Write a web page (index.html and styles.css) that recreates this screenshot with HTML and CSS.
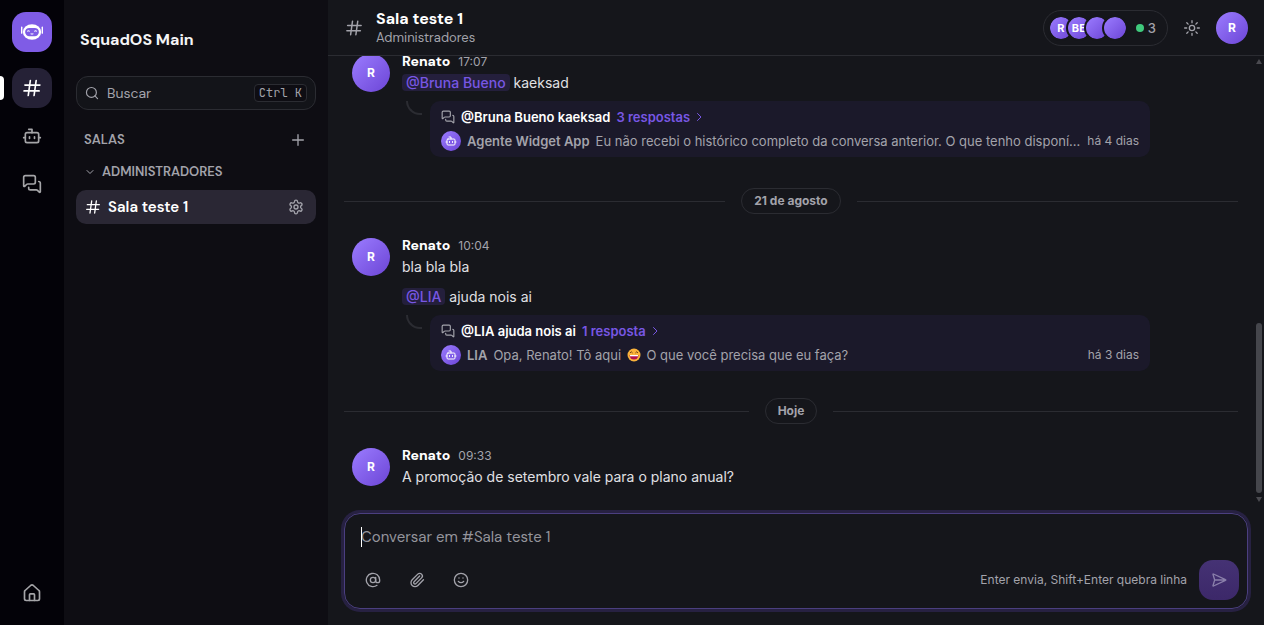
FILE: index.html
```html
<!DOCTYPE html>
<html lang="pt-BR">
<head>
<meta charset="utf-8">
<meta name="viewport" content="width=device-width, initial-scale=1">
<title>SquadOS Main</title>
<link rel="stylesheet" href="styles.css">
</head>
<body>
<svg class="sprite" aria-hidden="true">
  <symbol id="i-hash" viewBox="0 0 24 24"><path d="M3.5 8.5h18M2.5 15.5h18M10 3L7.500 21M17 3l-2.500 18"/></symbol>
  <symbol id="i-bot" viewBox="0 0 24 24"><path d="M12 8V4H8"/><rect x="4" y="8" width="16" height="12" rx="2"/><path d="M2 14h2M20 14h2M15 13v2M9 13v2"/></symbol>
  <symbol id="i-chats" viewBox="0 0 24 24"><path d="M16 10a2 2 0 0 1-2 2H6.828a2 2 0 0 0-1.414.586l-2.202 2.202A.71.71 0 0 1 2 14.286V4a2 2 0 0 1 2-2h10a2 2 0 0 1 2 2z"/><path d="M20 9a2 2 0 0 1 2 2v10.286a.71.71 0 0 1-1.212.502l-2.202-2.202A2 2 0 0 0 17.172 19H10a2 2 0 0 1-2-2v-1"/></symbol>
  <symbol id="i-home" viewBox="0 0 24 24"><path d="M9 21v-7a1 1 0 0 1 1-1h4a1 1 0 0 1 1 1v7"/><path d="M3 10.500a2 2 0 0 1 .7-1.500l7-6.300a2 2 0 0 1 2.600 0l7 6.300a2 2 0 0 1 .7 1.500V19a2 2 0 0 1-2 2H5a2 2 0 0 1-2-2z"/></symbol>
  <symbol id="i-search" viewBox="0 0 24 24"><circle cx="11" cy="11" r="8.500"/><path d="M21.500 21.500l-4.500-4.500"/></symbol>
  <symbol id="i-plus" viewBox="0 0 24 24"><path d="M12 4v16M4 12h16"/></symbol>
  <symbol id="i-down" viewBox="0 0 24 24"><path d="M6 9l6 6 6-6"/></symbol>
  <symbol id="i-right" viewBox="0 0 24 24"><path d="M9 5l7 7-7 7"/></symbol>
  <symbol id="i-gear" viewBox="0 0 24 24"><path d="M9.700 4.100a2.300 2.300 0 0 1 4.600 0 2.300 2.300 0 0 0 3.300 1.900 2.300 2.300 0 0 1 2.300 4 2.300 2.300 0 0 0 0 3.900 2.300 2.300 0 0 1-2.300 4 2.300 2.300 0 0 0-3.300 2 2.300 2.300 0 0 1-4.600 0 2.300 2.300 0 0 0-3.300-2 2.300 2.300 0 0 1-2.300-4 2.300 2.300 0 0 0 0-3.900 2.300 2.300 0 0 1 2.300-4 2.300 2.300 0 0 0 3.300-1.900"/><circle cx="12" cy="12" r="3"/></symbol>
  <symbol id="i-sun" viewBox="0 0 24 24"><circle cx="12" cy="12" r="4"/><path d="M12 1v3M12 20v3M4.200 4.200l2 2M17.800 17.800l2 2M1 12h3M20 12h3M6.200 17.800l-2 2M19.800 4.200l-2 2"/></symbol>
  <symbol id="i-at" viewBox="0 0 24 24"><circle cx="12" cy="12" r="4"/><path d="M16 8v5a3 3 0 0 0 6 0v-1a10 10 0 1 0-4 8"/></symbol>
  <symbol id="i-clip" viewBox="0 0 24 24"><path d="m16 6-8.414 8.586a2 2 0 0 0 2.829 2.829l8.414-8.586a4 4 0 1 0-5.657-5.657l-8.379 8.551a6 6 0 1 0 8.485 8.485l8.379-8.551"/></symbol>
  <symbol id="i-smile" viewBox="0 0 24 24"><circle cx="12" cy="12" r="10"/><path d="M8 14s1.500 2 4 2 4-2 4-2M9 9v.1M15 9v.1"/></symbol>
  <symbol id="i-send" viewBox="0 0 24 24"><path d="M3.700 3a.5.5 0 0 0-.7.600L5.500 12 3 20.400a.5.5 0 0 0 .7.600l18-8.500a.5.5 0 0 0 0-1zM6 12h16"/></symbol>
</svg>
<div class="app">
  <nav class="rail" aria-label="Principal">
    <a class="rail-logo" href="#" aria-label="SquadOS">
      <svg class="logo-icon" viewBox="0 0 24 24"><ellipse cx="12" cy="12" rx="10" ry="8.500" fill="#fff"/><rect x="0" y="6" width="1.500" height="8" rx=".7" fill="#fff"/><rect x="22.500" y="6" width="1.500" height="8" rx=".7" fill="#fff"/><rect x="4.500" y="7.500" width="15" height="9" rx="4.500" fill="#7f5ce6"/><path d="M6.800 11.500q1.300-1.600 2.600 0M14.600 11.500q1.300-1.600 2.600 0M10.500 13.800q1.500 1 3 0" fill="none" stroke="#fff" stroke-width="1.100"/></svg>
    </a>
    <a class="rail-item is-active" href="#" aria-label="Salas"><svg class="icon icon-20"><use href="#i-hash"/></svg></a>
    <a class="rail-item" href="#" aria-label="Agentes"><svg class="icon icon-20"><use href="#i-bot"/></svg></a>
    <a class="rail-item" href="#" aria-label="Conversas"><svg class="icon icon-20"><use href="#i-chats"/></svg></a>
    <a class="rail-item rail-home" href="#" aria-label="Início"><svg class="icon icon-20"><use href="#i-home"/></svg></a>
  </nav>

  <aside class="sidebar">
    <h2 class="workspace">SquadOS Main</h2>
    <button class="search" type="button"><svg class="icon icon-14"><use href="#i-search"/></svg><span class="search-label">Buscar</span><kbd class="kbd">Ctrl K</kbd></button>
    <div class="section"><span>SALAS</span><button class="plain" type="button" aria-label="Criar sala"><svg class="icon icon-16"><use href="#i-plus"/></svg></button></div>
    <button class="category" type="button"><svg class="icon icon-12"><use href="#i-down"/></svg>ADMINISTRADORES</button>
    <div class="room"><a class="room-link" href="#"><svg class="icon icon-16"><use href="#i-hash"/></svg>Sala teste 1</a><button class="plain" type="button" aria-label="Configurar sala"><svg class="icon icon-16"><use href="#i-gear"/></svg></button></div>
  </aside>

  <main class="main">
    <header class="header">
      <svg class="icon icon-18"><use href="#i-hash"/></svg>
      <div class="heading"><h1 class="title">Sala teste 1</h1><p class="subtitle">Administradores</p></div>
      <button class="members" type="button"><span class="stack"><span class="mini">R</span><span class="mini">BE</span><span class="mini"></span><span class="mini"></span></span><span class="dot"></span><span>3</span></button>
      <button class="plain theme" type="button" aria-label="Tema"><svg class="icon icon-16"><use href="#i-sun"/></svg></button>
      <button class="avatar avatar-user" type="button">R</button>
    </header>

    <div class="chat">
      <div class="messages">
        <article class="message message-last-of-day">
          <span class="avatar">R</span>
          <div class="body">
            <div class="meta"><strong class="name">Renato</strong><time>17:07</time></div>
            <p class="text"><span class="mention">@Bruna Bueno</span> kaeksad</p>
            <div class="thread-row"><span class="elbow"></span>
              <div class="thread">
                <div class="thread-head"><svg class="icon icon-14"><use href="#i-chats"/></svg><strong>@Bruna Bueno kaeksad</strong><a class="replies" href="#">3 respostas<svg class="icon icon-12"><use href="#i-right"/></svg></a></div>
                <div class="thread-last"><span class="bot"><svg class="icon icon-12"><use href="#i-bot"/></svg></span><strong>Agente Widget App</strong><span class="snippet">Eu não recebi o histórico completo da conversa anterior. O que tenho disponí...</span><time>há 4 dias</time></div>
              </div>
            </div>
          </div>
        </article>

        <div class="day"><span class="day-label">21 de agosto</span></div>

        <article class="message">
          <span class="avatar">R</span>
          <div class="body">
            <div class="meta"><strong class="name">Renato</strong><time>10:04</time></div>
            <p class="text">bla bla bla</p>
            <p class="text text-next"><span class="mention">@LIA</span> ajuda nois ai</p>
            <div class="thread-row"><span class="elbow"></span>
              <div class="thread">
                <div class="thread-head"><svg class="icon icon-14"><use href="#i-chats"/></svg><strong>@LIA ajuda nois ai</strong><a class="replies" href="#">1 resposta<svg class="icon icon-12"><use href="#i-right"/></svg></a></div>
                <div class="thread-last"><span class="bot"><svg class="icon icon-12"><use href="#i-bot"/></svg></span><strong>LIA</strong><span class="snippet">Opa, Renato! Tô aqui <svg class="emoji" viewBox="0 0 14 14" role="img" aria-label="sorriso"><circle cx="7" cy="7" r="6.500" fill="#fbb33b"/><path d="M2.500 7h9a4.500 4.500 0 0 1-9 0z" fill="#b3124f"/><path d="M3 7h8v1.300H3z" fill="#fff"/><path d="M3 5l1.300-1.200L5.600 5M8.400 5l1.300-1.200L11 5" fill="none" stroke="#5d3217" stroke-width=".9"/></svg> O que você precisa que eu faça?</span><time>há 3 dias</time></div>
              </div>
            </div>
          </div>
        </article>

        <div class="day"><span class="day-label">Hoje</span></div>

        <article class="message">
          <span class="avatar">R</span>
          <div class="body">
            <div class="meta"><strong class="name">Renato</strong><time>09:33</time></div>
            <p class="text">A promoção de setembro vale para o plano anual?</p>
          </div>
        </article>
      </div>
      <div class="scrollbar" aria-hidden="true"><span class="arrow-up"></span><span class="track"><span class="thumb"></span></span><span class="arrow-down"></span></div>
    </div>

    <form class="composer">
      <span class="caret"></span>
      <textarea class="input" rows="1" aria-label="Mensagem" placeholder="Conversar em #Sala teste 1"></textarea>
      <div class="tools">
        <button class="tool" type="button" aria-label="Mencionar"><svg class="icon icon-16"><use href="#i-at"/></svg></button>
        <button class="tool" type="button" aria-label="Anexar"><svg class="icon icon-16"><use href="#i-clip"/></svg></button>
        <button class="tool" type="button" aria-label="Emoji"><svg class="icon icon-16"><use href="#i-smile"/></svg></button>
        <span class="hint">Enter envia, Shift+Enter quebra linha</span>
        <button class="send" type="submit" aria-label="Enviar"><svg class="icon icon-16"><use href="#i-send"/></svg></button>
      </div>
    </form>
  </main>
</div>
</body>
</html>
```
FILE: styles.css
```css
:root {
  --bg: #15161b;
  --line: #2b2c32;
  --muted: #a3a3ab;
  --accent: #7857e4;
  --grad: linear-gradient(135deg, #9b7cff, #6c45d6);
  --display: "DM Sans", Inter, sans-serif;
}
* { box-sizing: border-box; }
body { margin: 0; background: var(--bg); color: #e0e0e4; font: 14px/20px Inter, sans-serif; }
h1, h2, p { margin: 0; }
button { font: inherit; color: inherit; border: 0; padding: 0; background: none; cursor: pointer; }
a { color: inherit; text-decoration: none; }
.sprite { display: none; }
.app { display: flex; height: 100vh; }

.icon { flex: none; display: block; fill: none; stroke: currentColor; stroke-width: 2; stroke-linecap: round; stroke-linejoin: round; }
.icon-12 { width: 12px; height: 12px; }
.icon-14 { width: 14px; height: 14px; }
.icon-16 { width: 16px; height: 16px; }
.icon-18 { width: 18px; height: 18px; }
.icon-20 { width: 20px; height: 20px; }
.plain { display: grid; place-items: center; color: var(--muted); }

.rail { flex: none; width: 64px; padding: 12px; display: flex; flex-direction: column; gap: 8px; background: #030208; }
.rail-logo, .rail-item { position: relative; display: grid; place-items: center; height: 40px; border-radius: 14px; }
.rail-logo { background: #7f5ce6; margin-bottom: 8px; }
.logo-icon { width: 22px; height: 22px; }
.rail-item { color: #a5a5a8; }
.rail-item.is-active { background: #252136; color: #fff; }
.rail-item.is-active::before { content: ""; position: absolute; left: -12px; top: 8px; width: 4px; height: 24px; background: #fff; border-radius: 0 4px 4px 0; }
.rail-home { margin-top: auto; }

.sidebar { flex: none; width: 264px; padding: 28px 12px; background: #0e0d13; font-family: var(--display); }
.workspace { padding: 0 4px; font-size: 16px; line-height: 24px; font-weight: 700; color: #f4f4f6; }
.search { display: flex; align-items: center; gap: 8px; width: 100%; height: 34px; margin-top: 24px; padding: 0 8px; border: 1px solid var(--line); border-radius: 12px; background: #131419; color: var(--muted); text-align: left; }
.search-label { flex: 1; }
.kbd { padding: 0 4px; border: 1px solid var(--line); border-radius: 4px; background: #0e0d13; font: 12px/16px "JetBrains Mono", "DejaVu Sans Mono", monospace; }
.section { display: flex; align-items: center; justify-content: space-between; margin-top: 20px; padding: 0 10px 0 8px; font-size: 13px; font-weight: 600; color: var(--muted); }
.category { display: flex; align-items: center; gap: 6px; margin: 12px 0 8px; padding: 0 8px; font-size: 13px; font-weight: 600; color: var(--muted); }
.room { display: flex; align-items: center; height: 34px; padding: 0 12px 0 9px; border-radius: 10px; background: #2a2734; color: #fff; }
.room-link { flex: 1; display: flex; align-items: center; gap: 7px; font-size: 15px; font-weight: 600; }

.main { flex: 1; min-width: 0; display: flex; flex-direction: column; }
.header { flex: none; display: flex; align-items: center; height: 56px; padding: 0 16px 0 17px; border-bottom: 1px solid var(--line); color: var(--muted); }
.heading { flex: 1; margin-left: 13px; font-family: var(--display); }
.title { font-size: 16px; line-height: 20px; font-weight: 700; color: #fff; }
.subtitle { font-size: 13px; line-height: 18px; }
.members { display: flex; align-items: center; height: 36px; padding: 0 11px 0 4px; border: 1px solid var(--line); border-radius: 18px; font-size: 13px; font-weight: 500; }
.stack { display: flex; margin-right: 8px; }
.mini { width: 26px; height: 26px; margin-left: -8px; border: 2px solid var(--bg); border-radius: 50%; background: var(--grad) padding-box; color: #fff; font-size: 11px; line-height: 22px; font-weight: 700; display: grid; place-items: center; }
.mini:first-child { margin-left: 0; }
.dot { width: 8px; height: 8px; margin-right: 4px; border-radius: 50%; background: #3fc97c; }
.theme { margin: 0 16px; }

.avatar { flex: none; display: grid; place-items: center; width: 38px; height: 38px; margin-top: 3px; border-radius: 50%; background: var(--grad); color: #fff; font-size: 12px; font-weight: 700; }
.avatar-user { width: 32px; height: 32px; margin-top: 0; }

.chat { flex: 1; min-height: 0; display: flex; }
.messages { flex: 1; min-width: 0; display: flex; flex-direction: column; justify-content: flex-end; padding: 0 16px 17px; overflow: hidden; }
.message { display: flex; align-items: flex-start; gap: 12px; padding-left: 8px; }
.message-last-of-day { margin-bottom: 4px; }
.body { flex: 1; min-width: 0; }
.meta { display: flex; align-items: baseline; gap: 8px; }
.name { font-family: var(--display); font-size: 14px; font-weight: 800; color: #fff; }
.meta time { font-size: 12px; color: var(--muted); }
.text { font-size: 14px; line-height: 22px; }
.text-next { margin-top: 8px; }
.mention { padding: 0 4px; border-radius: 4px; background: #241f3c; color: var(--accent); font-weight: 500; }
.thread-row { display: flex; margin-top: 7px; }
.elbow { flex: none; width: 16px; height: 14px; margin: 0 8px 0 4px; border: solid var(--line); border-width: 0 0 2px 2px; border-bottom-left-radius: 14px; }
.thread { flex: 1; min-width: 0; max-width: 720px; padding: 6px 11px; border-radius: 10px; background: #1b192a; font-size: 13px; }
.thread-head, .thread-last { display: flex; align-items: center; gap: 6px; color: var(--muted); }
.thread-head { line-height: 20px; margin-bottom: 4px; }
.thread-head strong { font-weight: 600; color: #fff; }
.thread-last strong { font-weight: 600; }
.replies { display: flex; align-items: center; gap: 3px; color: var(--accent); font-weight: 600; }
.bot { flex: none; display: grid; place-items: center; width: 20px; height: 20px; border-radius: 50%; background: var(--grad); color: #fff; }
.snippet { flex: 1; min-width: 0; overflow: hidden; white-space: nowrap; text-overflow: ellipsis; }
.thread-last time { font-size: 12px; white-space: nowrap; }
.emoji { width: 14px; height: 14px; margin: 0 2px; vertical-align: -2px; }

.day { display: flex; align-items: center; gap: 16px; margin: 27px 0 21px; }
.day::before, .day::after { content: ""; flex: 1; height: 1px; background: var(--line); }
.day-label { padding: 0 12px; border: 1px solid var(--line); border-radius: 13px; font-size: 12px; line-height: 24px; font-weight: 700; color: var(--muted); }

.scrollbar { flex: none; width: 10px; display: flex; flex-direction: column; align-items: center; padding: 3px 0; }
.arrow-up, .arrow-down { border: 3px solid transparent; }
.arrow-up { border-top: 0; border-bottom: 5px solid #4a4a50; }
.arrow-down { border-bottom: 0; border-top: 5px solid #4a4a50; }
.track { flex: 1; display: flex; align-items: flex-end; padding: 4px 0; }
.thumb { width: 6px; height: 40%; border-radius: 3px; background: #45464c; }

.composer { position: relative; flex: none; margin: 8px 16px 16px; padding: 12px 8px 8px 16px; border: 1px solid #4b3f80; border-radius: 16px; box-shadow: 0 0 0 3px #272142; }
.input { display: block; width: 100%; height: 24px; padding: 0; border: 0; outline: 0; resize: none; overflow: hidden; background: none; color: #fff; font: 15px/22px var(--display); }
.input::placeholder { color: #94949b; opacity: 1; }
.caret { position: absolute; left: 16px; top: 13px; width: 1px; height: 20px; background: #fff; }
.tools { display: flex; align-items: center; gap: 20px; margin-top: 10px; color: var(--muted); }
.tool { display: grid; place-items: center; width: 24px; height: 24px; }
.hint { margin-left: auto; font-size: 12px; }
.send { display: grid; place-items: center; width: 40px; height: 40px; margin-left: -8px; border-radius: 14px; background: linear-gradient(#453274, #3c2869); color: #8b80ab; }
```
